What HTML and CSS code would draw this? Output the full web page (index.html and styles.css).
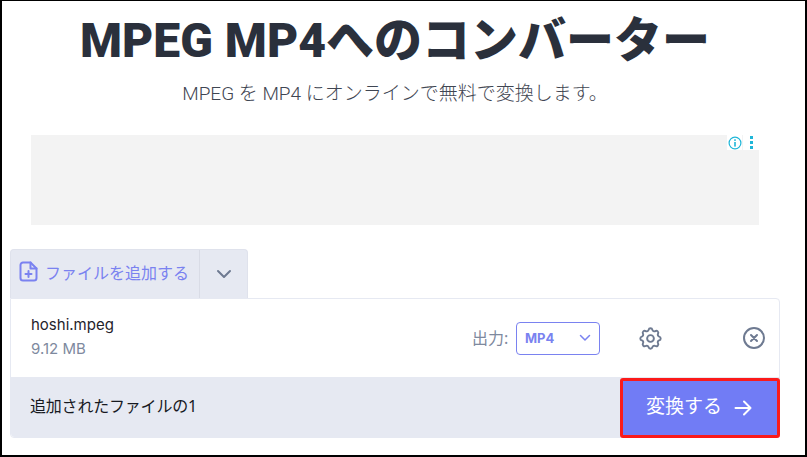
FILE: index.html
```html
<!DOCTYPE html>
<html lang="ja">
<head>
    <meta charset="UTF-8">
    <meta name="viewport" content="width=device-width, initial-scale=1.0">
    <title>MPEG MP4へのコンバーター</title>
    <link rel="stylesheet" href="styles.css">
</head>
<body>
<div class="page">
    <h1 class="title">MPEG MP4へのコンバーター</h1>
    <p class="subtitle">MPEG を MP4 にオンラインで無料で変換します。</p>

    <div class="ad">
        <div class="ad-icons">
            <span class="ad-box">
                <svg width="14" height="14" viewBox="0 0 14 14">
                    <circle cx="7" cy="7" r="5.9" fill="none" stroke="#1fb6d8" stroke-width="1.2"/>
                    <rect x="6.200" y="6" width="1.600" height="4.600" fill="#1fb6d8"/>
                    <rect x="6.200" y="3.300" width="1.600" height="1.600" fill="#1fb6d8"/>
                </svg>
            </span>
            <span class="ad-box ad-dots"><i></i><i></i><i></i></span>
        </div>
    </div>

    <div class="converter">
        <div class="tabs">
            <div class="add-file">
                <svg width="19" height="21" viewBox="0 0 19 21" fill="none" stroke="#7a82f0" stroke-width="2" stroke-linejoin="round" stroke-linecap="round">
                    <path d="M11.500 1.500H4a2.500 2.500 0 0 0-2.500 2.500v13A2.500 2.500 0 0 0 4 19.500h11a2.500 2.500 0 0 0 2.500-2.500V7.500z"/>
                    <path d="M11.500 1.500v6h6"/>
                    <path d="M9.500 10v6M6.500 13h6"/>
                </svg>
                <span>ファイルを追加する</span>
            </div>
            <div class="add-more">
                <svg width="16" height="10" viewBox="0 0 16 10" fill="none" stroke="#6e7a91" stroke-width="2" stroke-linecap="round" stroke-linejoin="round">
                    <path d="M2 2l6 6 6-6"/>
                </svg>
            </div>
        </div>

        <div class="card">
            <div class="file-row">
                <div class="file-info">
                    <div class="file-name">hoshi.mpeg</div>
                    <div class="file-size">9.12 MB</div>
                </div>
                <span class="output-label">出力:</span>
                <div class="format">
                    <span>MP4</span>
                    <svg width="12" height="8" viewBox="0 0 12 8" fill="none" stroke="#7a82f0" stroke-width="1.500" stroke-linecap="round" stroke-linejoin="round">
                        <path d="M1.500 1.500L6 6l4.500-4.500"/>
                    </svg>
                </div>
                <svg class="gear" width="27" height="27" viewBox="0 0 24 24" fill="none" stroke="#6e7a91" stroke-width="1.700" stroke-linecap="round" stroke-linejoin="round">
                    <path d="M10.300 4.300c.4-1.800 3-1.800 3.400 0a1.700 1.700 0 0 0 2.600 1.100c1.500-.9 3.300.8 2.400 2.400a1.700 1.700 0 0 0 1 2.500c1.800.4 1.800 3 0 3.400a1.700 1.700 0 0 0-1 2.600c.9 1.500-.9 3.300-2.400 2.400a1.700 1.700 0 0 0-2.600 1c-.4 1.800-3 1.800-3.400 0a1.700 1.700 0 0 0-2.600-1c-1.500.9-3.300-.9-2.400-2.400a1.700 1.700 0 0 0-1-2.600c-1.800-.4-1.800-3 0-3.400a1.700 1.700 0 0 0 1-2.500c-.9-1.600.9-3.300 2.400-2.400a1.700 1.700 0 0 0 2.600-1.100z"/>
                    <circle cx="12" cy="12" r="3"/>
                </svg>
                <svg class="remove" width="24" height="24" viewBox="0 0 24 24" fill="none" stroke="#6e7a91" stroke-width="2" stroke-linecap="round">
                    <circle cx="12" cy="12" r="10"/>
                    <path d="M9 9l6 6M15 9l-6 6"/>
                </svg>
            </div>
            <div class="card-footer">
                <span class="file-count">追加されたファイルの1</span>
                <button class="convert">
                    <span class="convert-label">変換する</span>
                    <svg width="18" height="16" viewBox="0 0 18 16" fill="none" stroke="#fff" stroke-width="2" stroke-linecap="round" stroke-linejoin="round">
                        <path d="M1.500 8h15M10 1.500L16.500 8 10 14.500"/>
                    </svg>
                </button>
            </div>
        </div>
    </div>
</div>
</body>
</html>
```

FILE: styles.css
```css
* {
    box-sizing: border-box;
}
html, body {
    margin: 0;
    height: 100%;
}
body {
    background: #fff;
    font-family: "Noto Sans", "Noto Sans CJK JP", sans-serif;
    overflow: hidden;
}
.page {
    height: 457px;
    border: solid #000;
    border-width: 1px 2px 2px 2px;
    padding: 0 25px 0 8px;
}
.title {
    margin: 11px 0 0;
    height: 58px;
    font-family: "Roboto", "Noto Sans CJK JP", sans-serif;
    font-size: 48px;
    line-height: 58px;
    font-weight: 900;
    color: #2a303c;
    text-align: center;
    white-space: nowrap;
}
.subtitle {
    margin: 10px 0 0;
    height: 28px;
    font-family: "Roboto", "Noto Sans CJK JP", sans-serif;
    font-size: 19px;
    line-height: 28px;
    font-weight: 300;
    color: #3f4652;
    text-align: center;
    white-space: nowrap;
}
.ad {
    width: 728px;
    height: 90px;
    margin: 27px 0 0 21px;
    background: #f3f3f3;
    display: flex;
    justify-content: flex-end;
    align-items: flex-start;
}
.ad-icons {
    display: flex;
    gap: 1px;
}
.ad-box {
    height: 15px;
    width: 15px;
    background: #fff;
    display: flex;
    align-items: center;
    justify-content: center;
}
.ad-dots {
    flex-direction: column;
    gap: 2px;
    width: 16px;
}
.ad-dots i {
    display: block;
    width: 3px;
    height: 3px;
    background: #1fb6d8;
}
.converter {
    margin-top: 24px;
    width: 770px;
}
.tabs {
    display: flex;
    width: 238px;
    height: 49px;
    background: #e6e9f2;
    border: 1px solid #dfe2ec;
    border-bottom: 0;
    border-radius: 4px 4px 0 0;
}
.add-file {
    width: 189px;
    display: flex;
    align-items: center;
    gap: 7px;
    padding: 0 0 5px 8px;
    font-size: 16px;
    color: #7a82f0;
    border-right: 1px solid #d9dce6;
}
.add-more {
    flex: 1;
    display: flex;
    align-items: center;
    justify-content: center;
}
.card {
    background: #fff;
    border: 1px solid #e6e9f2;
    border-radius: 0 4px 4px 4px;
    height: 140px;
    display: flex;
    flex-direction: column;
}
.file-row {
    height: 78px;
    display: flex;
    align-items: center;
    padding-left: 20px;
}
.file-info {
    width: 441px;
    margin-top: -3px;
}
.file-name {
    font-family: "Inter", sans-serif;
    font-size: 15px;
    line-height: 20px;
    color: #1f232b;
}
.file-size {
    font-family: "Inter", sans-serif;
    font-size: 15px;
    line-height: 20px;
    margin-top: 4px;
    color: #7e899e;
}
.output-label {
    width: 44px;
    font-size: 16px;
    color: #7e899e;
    padding-bottom: 3px;
}
.format {
    width: 84px;
    height: 33px;
    border: 1px solid #7a82f0;
    border-radius: 4px;
    display: flex;
    align-items: center;
    justify-content: space-between;
    padding: 0 8px 0 8px;
    font-family: "Inter", sans-serif;
    font-size: 13px;
    font-weight: 700;
    color: #7a82f0;
}
.gear {
    margin-left: 37px;
}
.remove {
    margin-left: 78px;
}
.card-footer {
    flex: 1;
    display: flex;
    align-items: center;
    justify-content: space-between;
    background: #e6e9f2;
    padding-left: 19px;
    border-radius: 0 0 4px 4px;
}
.file-count {
    font-size: 16px;
    letter-spacing: -0.2px;
    color: #16191f;
    padding-bottom: 5px;
}
.convert {
    width: 160px;
    height: 60px;
    margin: 0 -1px -1px 0;
    border: 3px solid #fb1a1a;
    border-radius: 3px;
    background: #717cf5;
    color: #fff;
    font-family: "Noto Sans", "Noto Sans CJK JP", sans-serif;
    font-size: 19px;
    display: flex;
    align-items: center;
    justify-content: center;
    gap: 12px;
    padding-right: 8px;
}
.convert-label {
    padding-bottom: 5px;
}
```
